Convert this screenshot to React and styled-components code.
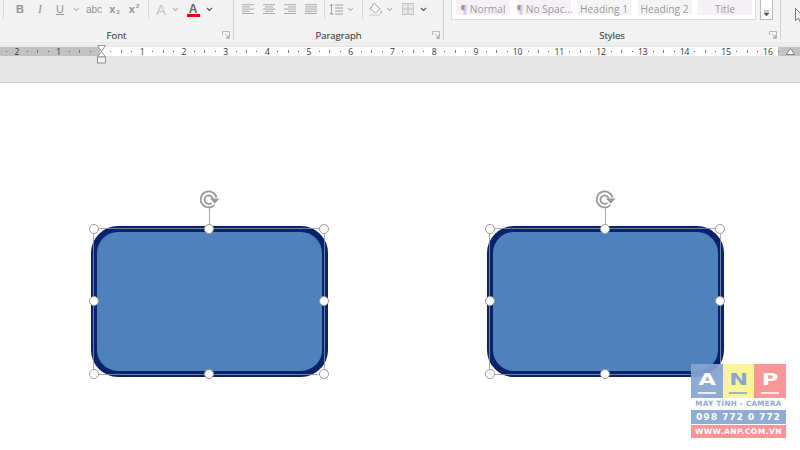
import React from 'react';
import styled, { createGlobalStyle } from 'styled-components';

const Global = createGlobalStyle`
  html, body { margin: 0; padding: 0; width: 800px; height: 450px; overflow: hidden; background: #fff; }
  * { box-sizing: border-box; }
`;
const Screen = styled.div`
  width: 800px; height: 450px; display: flex; flex-direction: column; position: relative; overflow: hidden;
  font-family: "Open Sans", "Noto Sans", sans-serif;
`;
const Ribbon = styled.div`
  height: 43px; flex: none; background: #f3f3f3; display: flex; border-bottom: 1px solid #e9e9e9;
`;
const Group = styled.div`
  width: ${p => p.$w}px; flex: none; position: relative; display: flex; flex-direction: column;
  border-right: 1px solid #d4d4d4; height: 40px;
`;
const GroupBody = styled.div`
  height: 18px; flex: none; display: flex; align-items: center; position: relative;
`;
const GroupLabel = styled.div`
  font-size: 9.5px; line-height: 13px; height: 13px; margin-top: 11px; color: #444; text-align: center;
  -webkit-text-stroke: 0.15px #444;
`;
const Launcher = styled.svg`
  position: absolute; right: 3px; bottom: 1px; width: 8px; height: 8px;
`;
const Slot = styled.span`
  width: ${p => p.$w}px; flex: none; display: flex; align-items: center; justify-content: center;
  font-family: ${p => p.$serif ? '"Liberation Serif", serif' : '"Liberation Sans", sans-serif'};
  font-size: ${p => p.$size || 11}px; font-weight: ${p => p.$bold ? 700 : 400};
  font-style: ${p => p.$italic ? 'italic' : 'normal'};
  text-decoration: ${p => p.$under ? 'underline' : 'none'};
  color: ${p => p.$color || '#929292'}; height: 18px; position: relative;
`;
const Sub = styled.span`
  font-size: 6px; position: relative; top: ${p => p.$top}px; margin-left: 1px;
`;
const RedBar = styled.span`
  position: absolute; left: 50%; margin-left: -6.5px; bottom: 1px; width: 13px; height: 3px; background: #e0000f;
`;
const Divider = styled.span`
  width: 1px; height: 19px; flex: none; background: #d8d8d8;
`;
const Gallery = styled.div`
  position: absolute; left: 7px; top: 0; width: 305px; height: 20px; background: #fff; border: 1px solid #dcdcdc; border-top: 0;
  display: flex; align-items: flex-start; padding-left: 4px; gap: 6.5px;
`;
const StyleItem = styled.div`
  width: 54px; height: 15px; flex: none; color: #989898; font-size: 10.2px; line-height: 18px;
  text-align: center; white-space: nowrap;
  font-family: "Open Sans", sans-serif; background: ${p => p.$plain ? '#f6f5f6' : '#f6f1f6'};
`;
const More = styled.div`
  position: absolute; left: 316px; top: 0; width: 13px; height: 20px; background: #fff; border: 1px solid #b9b9b9;
  border-top: 0; display: flex; align-items: flex-end; justify-content: center; padding-bottom: 2px;
`;
const Cursor = styled.svg`
  position: absolute; left: 14px; top: 8px; width: 9px; height: 15px;
`;
const RightGroup = styled.div`
  flex: 1; position: relative;
`;

const RulerBand = styled.div`
  height: 40px; flex: none; background: #e6e6e6; border-bottom: 1px solid #c9c9c9; padding-top: 4px; position: relative;
  box-shadow: inset 0 3px 0 #eeeeee;
`;
const RulerStrip = styled.div`
  height: 9px; display: flex; overflow: hidden; position: relative;
  background: linear-gradient(to right, #c2c2c2 0 100px, #ffffff 100px 778px, #c2c2c2 778px);
`;
const RulerTrack = styled.div`
  display: flex; flex: none; margin-left: -19.5px;
`;
const RulerCell = styled.div`
  width: 41.73px; flex: none; display: grid; grid-template-columns: repeat(4, 1fr); align-items: center; justify-items: center; height: 9px;
`;
const Dot = styled.span`
  width: 1px; height: 1px; background: #666;
`;
const Tick = styled.span`
  width: 1px; height: 3px; background: #777;
`;
const RulerNum = styled.span`
  font-size: 8.5px; line-height: 9px; color: #333; font-family: "Open Sans", sans-serif;
`;
const MarkerSvg = styled.svg`
  position: absolute; left: ${p => p.$x}px; top: ${p => p.$y}px; width: ${p => p.$w}px; height: ${p => p.$h}px; overflow: visible;
`;

const Page = styled.div`
  flex: 1; position: relative; background: #fff;
`;
const ShapeWrap = styled.div`
  position: absolute; left: ${p => p.$x}px; top: 142.5px; width: 237px; height: 151.5px;
`;
const RoundedRect = styled.div`
  width: 100%; height: 100%; background: #4f81bd; border: 6.5px solid #07236b; border-radius: 27px;
`;
const SelectBox = styled.div`
  position: absolute; left: 2px; top: 2.5px; right: 3px; bottom: 2px; border: 1px solid rgba(150, 150, 165, 0.8);
`;
const Handle = styled.span`
  position: absolute; width: 10px; height: 10px; border-radius: 50%; background: #fff; border: 1.7px solid #999;
  left: ${p => p.$l}%; top: ${p => p.$t}%; transform: translate(-50%, -50%);
`;
const RotateLine = styled.span`
  position: absolute; left: 50%; top: -22px; height: 23px; width: 1px; background: #a5a5a5;
`;
const RotateIcon = styled.svg`
  position: absolute; left: 50%; top: -40px; width: 24px; height: 22px; margin-left: -11px;
`;

const Watermark = styled.div`
  position: absolute; left: 691px; top: 281px; width: 95px; display: flex; flex-direction: column; opacity: 0.93;
`;
const Tiles = styled.div`
  display: grid; grid-template-columns: repeat(3, 1fr); height: 34px;
`;
const Tile = styled.div`
  background: ${p => p.$bg}; color: ${p => p.$fg}; display: flex; flex-direction: column; align-items: center; justify-content: center;
  font-family: "DejaVu Sans", sans-serif; font-weight: 700; font-size: 16px; line-height: 16px; padding-top: 4px;
  &::after { content: ""; width: 18px; height: 1.5px; background: ${p => p.$fg}; opacity: 0.8; margin-top: 4px; }
`;
const TileLetter = styled.span`
  display: block; transform: scaleX(1.4);
`;
const Tagline = styled.div`
  height: 12px; font-family: "DejaVu Sans", sans-serif; font-weight: 700; font-size: 7.2px; line-height: 12px;
  color: #86a6d2; white-space: nowrap; text-align: center; letter-spacing: 0.3px;
`;
const Bar = styled.div`
  height: ${p => p.$h}px; background: ${p => p.$bg}; color: #fff; font-family: "DejaVu Sans", sans-serif; font-weight: 700;
  font-size: ${p => p.$size}px; line-height: ${p => p.$h}px; text-align: center; white-space: nowrap; letter-spacing: ${p => p.$ls}px;
  margin-bottom: ${p => p.$mb || 0}px;
`;

const Chev = ({ dark }) => (
  <svg width="7" height="5" viewBox="0 0 7 5"><path d="M1 1l2.500 2.500L6 1" fill="none" stroke={dark ? '#555' : '#bbb'} strokeWidth="1.1" /></svg>
);
const LauncherIcon = () => (
  <Launcher viewBox="0 0 8 8"><path d="M.5 4V.5H7.500V7.500H4M3 3l3.500 3.500M6.500 4v2.500H4" fill="none" stroke="#a8a8a8" strokeWidth=".8" /></Launcher>
);
const Lines = ({ kind }) => {
  const widths = kind === 'full' ? [12, 12, 12, 12, 12] : [12, 8, 12, 8, 12];
  const xOf = (w) => kind === 'left' || kind === 'full' ? 0 : kind === 'right' ? 12 - w : (12 - w) / 2;
  return (
    <svg width="12" height="11" viewBox="0 0 12 11">
      {widths.map((w, i) => <rect key={i} x={xOf(w)} y={i * 2.2 + .2} width={w} height="1" fill="#a8a8a8" />)}
    </svg>
  );
};
const LineSpacing = () => (
  <svg width="14" height="13" viewBox="0 0 14 13" fill="none" stroke="#a0a0a0" strokeWidth="1">
    <path d="M2.500 1v11M1 3l1.500-2 1.500 2M1 10l1.500 2 1.500-2" />
    <path d="M6 2h8M6 5h8M6 8h8M6 11h8" />
  </svg>
);
const Fill = () => (
  <svg width="15" height="14" viewBox="0 0 15 14">
    <path d="M6 1 L12 7 L7.500 11 L2.500 7Z" fill="#f7f7f7" stroke="#a8a8a8" strokeWidth="1" />
    <path d="M4 5.500c-2-.5-2.500 1-2 2" fill="none" stroke="#a8a8a8" strokeWidth=".9" />
    <path d="M13 8c1 1.500 1.500 2 1 3-.6.8-2 .4-1.800-.8z" fill="#b5b5b5" />
    <rect x="1" y="12" width="11" height="2" fill="#dcdcdc" />
  </svg>
);
const Borders = () => (
  <svg width="12" height="12" viewBox="0 0 12 12" fill="#e6e6e6" stroke="#c4c4c4" strokeWidth="1">
    <rect x=".5" y=".5" width="11" height="11" /><path d="M6 .5v11M.5 6h11" />
  </svg>
);
const RotateGlyph = () => (
  <RotateIcon viewBox="0 0 24 22" fill="none" stroke="#9a9a9a">
    <path d="M18.500 8.500a8 8 0 1 0-2 7.500" strokeWidth="1.800" />
    <path d="M14.800 10a4.200 4.200 0 1 0-1.300 3.800" strokeWidth="1.800" />
    <path d="M12 9.500h9.500l-4.700 5.200z" fill="#9a9a9a" stroke="none" />
  </RotateIcon>
);

const Shape = ({ x }) => {
  const pts = [[0, 0], [50, 0], [100, 0], [0, 49.600], [100, 49.600], [0, 100], [50, 100], [100, 100]];
  return (
    <ShapeWrap $x={x}>
      <RoundedRect />
      <SelectBox>
        <RotateLine />
        <RotateGlyph />
        {pts.map(([l, t]) => <Handle key={`${l}-${t}`} $l={l} $t={t} />)}
      </SelectBox>
    </ShapeWrap>
  );
};

const nums = [2, 1, 0, 1, 2, 3, 4, 5, 6, 7, 8, 9, 10, 11, 12, 13, 14, 15, 16];

export default function App() {
  return (
    <Screen>
      <Global />
      <Ribbon>
        <Group $w={234}>
          <GroupBody>
            <Slot $w={3} />
            <Divider />
            <Slot $w={10} />
            <Slot $w={12} $bold>B</Slot>
            <Slot $w={8} />
            <Slot $w={12} $italic $serif $size={12}>I</Slot>
            <Slot $w={8} />
            <Slot $w={12} $under>U</Slot>
            <Slot $w={5} />
            <Slot $w={11}><Chev /></Slot>
            <Slot $w={2} />
            <Slot $w={20} $size={10}>abc</Slot>
            <Slot $w={21} $bold>x<Sub $top={3}>2</Sub></Slot>
            <Slot $w={18} $bold>x<Sub $top={-3}>2</Sub></Slot>
            <Slot $w={5} />
            <Divider />
            <Slot $w={4.500} />
            <Slot $w={15} $size={15} $color="#c9c9c9">A</Slot>
            <Slot $w={1} />
            <Slot $w={11}><Chev /></Slot>
            <Slot $w={4.500} />
            <Slot $w={16} $size={12} $bold $color="#666">A<RedBar /></Slot>
            <Slot $w={4.500} />
            <Slot $w={7}><Chev dark /></Slot>
          </GroupBody>
          <GroupLabel>Font</GroupLabel>
          <LauncherIcon />
        </Group>
        <Group $w={210}>
          <GroupBody>
            <Slot $w={8} />
            <Slot $w={12}><Lines kind="left" /></Slot>
            <Slot $w={9} />
            <Slot $w={12}><Lines kind="center" /></Slot>
            <Slot $w={9} />
            <Slot $w={12}><Lines kind="right" /></Slot>
            <Slot $w={9} />
            <Slot $w={12}><Lines kind="full" /></Slot>
            <Slot $w={7} />
            <Divider />
            <Slot $w={4} />
            <Slot $w={14}><LineSpacing /></Slot>
            <Slot $w={2} />
            <Slot $w={10}><Chev /></Slot>
            <Slot $w={7} />
            <Divider />
            <Slot $w={5} />
            <Slot $w={15}><Fill /></Slot>
            <Slot $w={2} />
            <Slot $w={9}><Chev /></Slot>
            <Slot $w={8} />
            <Slot $w={12}><Borders /></Slot>
            <Slot $w={6} />
            <Slot $w={7}><Chev dark /></Slot>
          </GroupBody>
          <GroupLabel>Paragraph</GroupLabel>
          <LauncherIcon />
        </Group>
        <Group $w={337}>
          <GroupBody>
            <Gallery>
              <StyleItem>¶ Normal</StyleItem>
              <StyleItem>¶ No Spac...</StyleItem>
              <StyleItem $plain>Heading 1</StyleItem>
              <StyleItem $plain>Heading 2</StyleItem>
              <StyleItem>Title</StyleItem>
            </Gallery>
            <More>
              <svg width="7" height="7" viewBox="0 0 7 7"><path d="M1 1h5M1 3h5l-2.500 3z" fill="#555" stroke="#555" strokeWidth=".6" /></svg>
            </More>
          </GroupBody>
          <GroupLabel>Styles</GroupLabel>
          <LauncherIcon />
        </Group>
        <RightGroup>
          <Cursor viewBox="0 0 9 15"><path d="M.5.500v12l3-2.500 2 4.500 2-1-2-4.500h3.500z" fill="#fff" stroke="#666" strokeWidth=".9" /></Cursor>
        </RightGroup>
      </Ribbon>
      <RulerBand>
        <RulerStrip>
          <RulerTrack>
            {nums.map((n, i) => (
              <RulerCell key={i}>
                <Dot /><Tick /><Dot />
                {n === 0 ? <span /> : <RulerNum>{n}</RulerNum>}
              </RulerCell>
            ))}
            <RulerCell><Dot /><span /><span /><span /></RulerCell>
          </RulerTrack>
        </RulerStrip>
        <MarkerSvg $x={97} $y={2} $w={9} $h={18} viewBox="0 0 9 18">
          <path d="M.5.500h8L4.500 6.500zM4.500 6.500l4 5.500h-8z" fill="#fff" stroke="#8a8a8a" strokeWidth=".9" />
          <rect x=".5" y="12" width="8" height="6" fill="#f3f3f3" stroke="#8a8a8a" strokeWidth=".9" />
        </MarkerSvg>
        <MarkerSvg $x={786} $y={5} $w={9} $h={7} viewBox="0 0 9 7">
          <path d="M4.500.500l4 6h-8z" fill="#fff" stroke="#777" strokeWidth=".9" />
        </MarkerSvg>
      </RulerBand>
      <Page>
        <Shape x={91} />
        <Shape x={487} />
        <Watermark>
          <Tiles>
            <Tile $bg="#85a5d1" $fg="#ffffff"><TileLetter>A</TileLetter></Tile>
            <Tile $bg="#faf590" $fg="#7f9fcf"><TileLetter>N</TileLetter></Tile>
            <Tile $bg="#f98f90" $fg="#ffffff"><TileLetter>P</TileLetter></Tile>
          </Tiles>
          <Tagline>MÁY TÍNH - CAMERA</Tagline>
          <Bar $h={14} $bg="#86a6d2" $size={9.300} $ls={0.8} $mb={1}>098 772 0 772</Bar>
          <Bar $h={13} $bg="#f88f91" $size={7.600} $ls={0.4}>WWW.ANP.COM.VN</Bar>
        </Watermark>
      </Page>
    </Screen>
  );
}
